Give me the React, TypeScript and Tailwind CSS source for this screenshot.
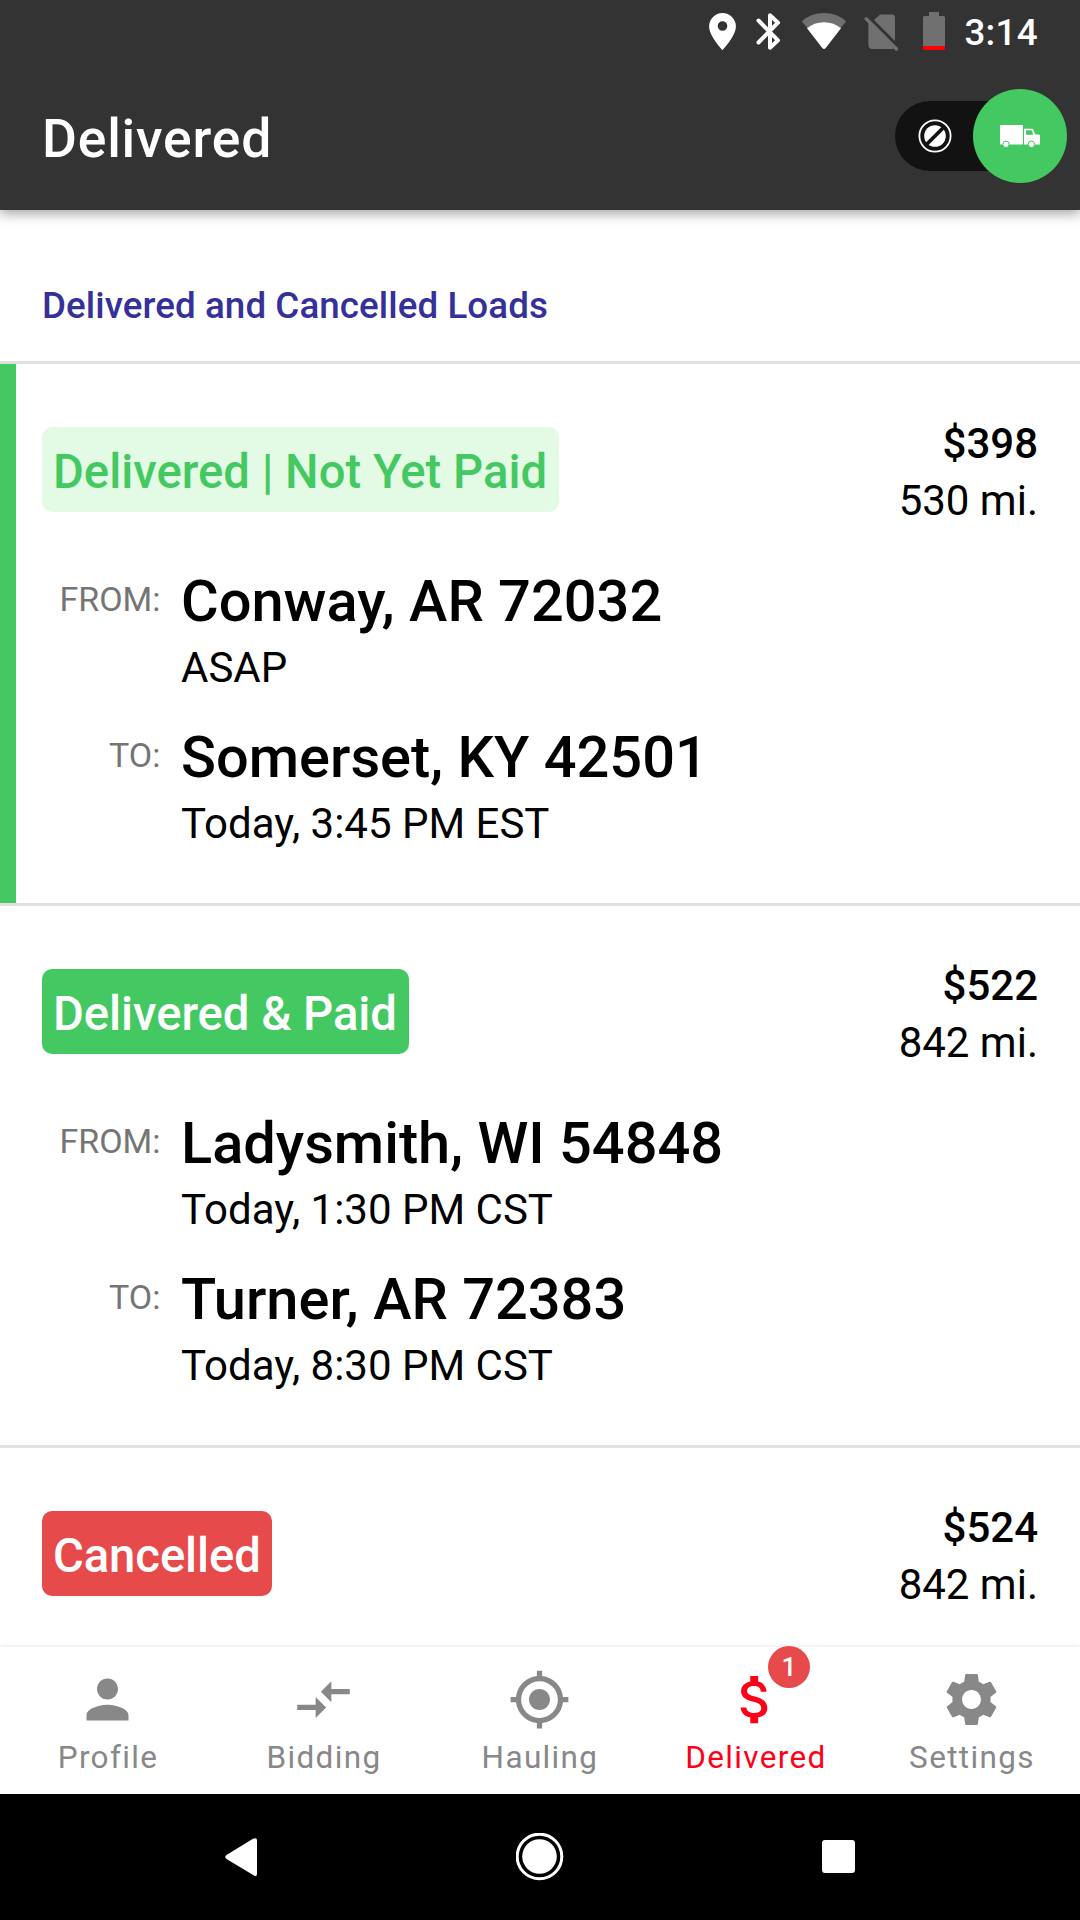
import type { ComponentType, ReactNode } from "react";
import clsx from "clsx";
import {
  MdAttachMoney,
  MdCompareArrows,
  MdMyLocation,
  MdPerson,
} from "react-icons/md";

type IconProps = { className?: string };

type Stop = { label: string; city: string; time: string };

type Load = {
  status: "unpaid" | "paid" | "cancelled";
  price: string;
  distance: string;
  stops: Stop[];
};

const loads: Load[] = [
  {
    status: "unpaid",
    price: "$398",
    distance: "530 mi.",
    stops: [
      { label: "FROM:", city: "Conway, AR 72032", time: "ASAP" },
      { label: "TO:", city: "Somerset, KY 42501", time: "Today, 3:45 PM EST" },
    ],
  },
  {
    status: "paid",
    price: "$522",
    distance: "842 mi.",
    stops: [
      {
        label: "FROM:",
        city: "Ladysmith, WI 54848",
        time: "Today, 1:30 PM CST",
      },
      { label: "TO:", city: "Turner, AR 72383", time: "Today, 8:30 PM CST" },
    ],
  },
  { status: "cancelled", price: "$524", distance: "842 mi.", stops: [] },
];

const statuses = {
  unpaid: {
    text: "Delivered | Not Yet Paid",
    className: "w-[517px] bg-[#e3fbe4] text-[#44c962]",
  },
  paid: {
    text: "Delivered & Paid",
    className: "w-[367px] bg-[#44c962] tracking-[-0.05px] text-white",
  },
  cancelled: {
    text: "Cancelled",
    className: "w-[230px] bg-[#e64a4a] tracking-[-0.1px] text-white",
  },
};

function SettingsIcon({ className }: IconProps) {
  return (
    <svg viewBox="-0.35 -0.35 24.7 24.7" fill="currentColor" className={className}>
      <path d="M19.43 12.98c.04-.32.07-.64.07-.98s-.03-.66-.07-.98l2.11-1.65c.19-.15.24-.42.12-.64l-2-3.46c-.12-.22-.39-.3-.61-.22l-2.49 1c-.52-.4-1.08-.73-1.69-.98l-.38-2.65C14.46 2.18 14.25 2 14 2h-4c-.25 0-.46.18-.49.42l-.38 2.65c-.61.25-1.17.59-1.69.98l-2.49-1c-.23-.09-.49 0-.61.22l-2 3.46c-.13.22-.07.49.12.64l2.11 1.65c-.04.32-.07.65-.07.98s.03.66.07.98l-2.11 1.65c-.19.15-.24.42-.12.64l2 3.46c.12.22.39.3.61.22l2.49-1c.52.4 1.08.73 1.69.98l.38 2.65c.03.24.24.42.49.42h4c.25 0 .46-.18.49-.42l.38-2.65c.61-.25 1.17-.59 1.69-.98l2.49 1c.23.09.49 0 .61-.22l2-3.46c.12-.22.07-.49-.12-.64l-2.11-1.65zM12 15.7c-2.04 0-3.7-1.66-3.7-3.7s1.66-3.7 3.7-3.7 3.7 1.66 3.7 3.7-1.66 3.7-3.7 3.7z" />
    </svg>
  );
}

const tabs: {
  name: string;
  Icon: ComponentType<IconProps>;
  active?: boolean;
  badge?: number;
}[] = [
  { name: "Profile", Icon: MdPerson },
  { name: "Bidding", Icon: MdCompareArrows },
  { name: "Hauling", Icon: MdMyLocation },
  { name: "Delivered", Icon: MdAttachMoney, active: true, badge: 1 },
  { name: "Settings", Icon: SettingsIcon },
];

function StatusBar() {
  return (
    <div className="flex h-[63px] justify-end pr-[42px]">
      <svg width="246" height="63" viewBox="700 0 246 63" fill="#fff">
        <path
          fillRule="evenodd"
          d="M722.5 13a13.4 13.4 0 0 0-13.4 13.4c0 9.6 13.4 23.6 13.4 23.6s13.4-14 13.4-23.6A13.4 13.4 0 0 0 722.5 13zm0 8.2a4.8 4.8 0 1 1 0 9.6a4.8 4.8 0 0 1 0-9.6z"
        />
        <path
          d="M758.5 20.5 778 40.3 770 47.7V15.3L778 22.7 758.5 42.5"
          fill="none"
          stroke="#fff"
          strokeWidth="4"
          strokeLinejoin="round"
          strokeLinecap="round"
        />
        <path
          fill="#707070"
          d="M824 48.8 801.8 21.3Q811 13 824 13T846.2 21.3z"
        />
        <path d="M822.3 48 807 28.3Q814 22.3 824 22.3T841 28.3L825.7 48Q824 50 822.3 48z" />
        <g fill="#707070">
          <path d="M868.4 21.8V44.5Q868.4 49 872.5 49H891.5Q893.5 49 894.5 48z" />
          <path d="M874 20 880 14.6H892Q895 14.6 895 18V41z" />
          <path
            d="M866.2 18.7 896.5 49"
            fill="none"
            stroke="#707070"
            strokeWidth="3.4"
            strokeLinecap="round"
          />
          <path d="M929 12h10v4h4.5q1.5 0 1.5 1.5V46h-22V17.5q0-1.5 1.5-1.5h4.5z" />
        </g>
        <path fill="#f00" d="M923 46h22v2.5q0 1.5-1.5 1.5h-19q-1.5 0-1.5-1.5z" />
      </svg>
      <span className="ml-[18px] text-[36.75px] leading-[66px] font-medium tracking-[0.3px] text-white">
        3:14
      </span>
    </div>
  );
}

function AvailabilityToggle() {
  return (
    <div className="relative mt-[26px] h-[94px] w-[172px]">
      <div className="mt-[12px] h-[70px] w-[150px] rounded-full bg-[#121212]" />
      <svg
        viewBox="0 0 34 34"
        className="absolute top-[30px] left-[22.5px] size-[34px]"
      >
        <circle
          cx="17"
          cy="17"
          r="15.6"
          fill="none"
          stroke="#fff"
          strokeWidth="1.8"
        />
        <circle cx="17" cy="17" r="10.8" fill="#fff" />
        <path d="M8 26 26 8" stroke="#121212" strokeWidth="3.8" />
      </svg>
      <div className="absolute top-0 right-0 flex size-[94px] items-center justify-center rounded-full bg-[#44c962]">
        <svg width="40" height="23" viewBox="0 0 40 23" fill="#fff">
          <rect width="23" height="19.5" rx="0.8" />
          <path
            fillRule="evenodd"
            d="M24 3.7h8q.9 0 1.3.9l2 4.9h3.7q1 0 1 1v9H24zM26 5.2v4.5h7.3l-1.8-4.5z"
          />
          <circle cx="6" cy="19.3" r="3.2" stroke="#44c962" strokeWidth="1" />
          <circle cx="31.4" cy="19.3" r="3.2" stroke="#44c962" strokeWidth="1" />
        </svg>
      </div>
    </div>
  );
}

function Header() {
  return (
    <header className="relative z-10 h-[210px] bg-[#333333] shadow-[0_4px_11px_rgba(0,0,0,0.35)]">
      <StatusBar />
      <div className="flex h-[147px] justify-between pr-[13px] pl-[42px]">
        <h1 className="text-[53.5px] leading-[151px] font-medium tracking-[0.8px] text-white">
          Delivered
        </h1>
        <AvailabilityToggle />
      </div>
    </header>
  );
}

function StopRow({ label, city, time }: Stop) {
  return (
    <div className="flex h-[156px]">
      <div className="w-[118.5px] text-right text-[34px] leading-[62px] text-[#757575]">
        {label}
      </div>
      <div className="ml-[20.5px]">
        <div className="text-[57.75px] leading-[66px] font-medium">{city}</div>
        <div className="text-[42px] leading-[68px]">{time}</div>
      </div>
    </div>
  );
}

function StatusLabel({ status }: { status: Load["status"] }) {
  const { text, className } = statuses[status];
  return (
    <div
      className={clsx(
        "h-[85px] rounded-[10px] pl-[11px] text-[47.25px] leading-[91px] font-medium whitespace-nowrap",
        className,
      )}
    >
      {text}
    </div>
  );
}

function LoadCard({ status, price, distance, stops }: Load) {
  return (
    <article
      className={clsx(
        "h-[542px] shrink-0 border-b-[3px] border-[#e0e0e0]",
        status === "unpaid" &&
          "bg-[linear-gradient(#44c962,#44c962)] bg-[length:16px_100%] bg-no-repeat",
      )}
    >
      <div className="flex h-[204px] justify-between px-[42px] pt-[63px]">
        <StatusLabel status={status} />
        <div className="-mt-[12px] text-right text-[42px] leading-[57px]">
          <div className="font-medium">{price}</div>
          <div>{distance}</div>
        </div>
      </div>
      <div className="px-[42px]">
        {stops.map((stop) => (
          <StopRow key={stop.label} {...stop} />
        ))}
      </div>
    </article>
  );
}

function TabBar() {
  return (
    <nav className="relative z-10 grid h-[147px] grid-cols-5 bg-white shadow-[0_0_5px_rgba(0,0,0,0.12)]">
      {tabs.map(({ name, Icon, active, badge }) => (
        <div
          key={name}
          className={clsx(
            "relative flex flex-col items-center pt-[21px] pr-px",
            active ? "text-[#ff0019]" : "text-[#888888]",
          )}
        >
          <Icon className="size-[63px]" />
          <span className="ml-px text-[31.5px] leading-[53px] tracking-[1.35px]">
            {name}
          </span>
          {badge && (
            <span className="absolute -top-px left-[120px] size-[42px] rounded-full bg-[#e64a4a] text-center text-[26.25px] leading-[42px] font-medium text-white">
              {badge}
            </span>
          )}
        </div>
      ))}
    </nav>
  );
}

function SystemNav() {
  return (
    <div className="flex h-[126px] items-center justify-between bg-black px-[225px]">
      <svg width="33" height="38" viewBox="0 0 33 38" fill="#fff">
        <path d="M1.5 17 28 .8q4-1.5 4 1.5V36q0 3-3 1.5L1.5 21Q-1 19 1.5 17z" />
      </svg>
      <svg width="48" height="48" viewBox="0 0 48 48" fill="#fff">
        <circle cx="23.5" cy="23.5" r="22.3" fill="none" stroke="#fff" strokeWidth="3" />
        <circle cx="23.5" cy="23.5" r="17.3" />
      </svg>
      <div className="mb-px size-[33px] rounded-[3px] bg-white" />
    </div>
  );
}

function Screen({ children }: { children: ReactNode }) {
  return (
    <div className="flex h-[1920px] w-[1080px] flex-col overflow-hidden bg-white font-[Roboto,sans-serif] text-black">
      {children}
    </div>
  );
}

export default function App() {
  return (
    <Screen>
      <Header />
      <main className="flex min-h-0 flex-1 flex-col overflow-hidden">
        <h2 className="h-[154px] shrink-0 border-b-[3px] border-[#e0e0e0] pt-[63px] pl-[42px] text-[36.75px] leading-[66px] font-medium tracking-[0.07px] text-[#353199]">
          Delivered and Cancelled Loads
        </h2>
        {loads.map((load) => (
          <LoadCard key={load.status} {...load} />
        ))}
      </main>
      <TabBar />
      <SystemNav />
    </Screen>
  );
}
